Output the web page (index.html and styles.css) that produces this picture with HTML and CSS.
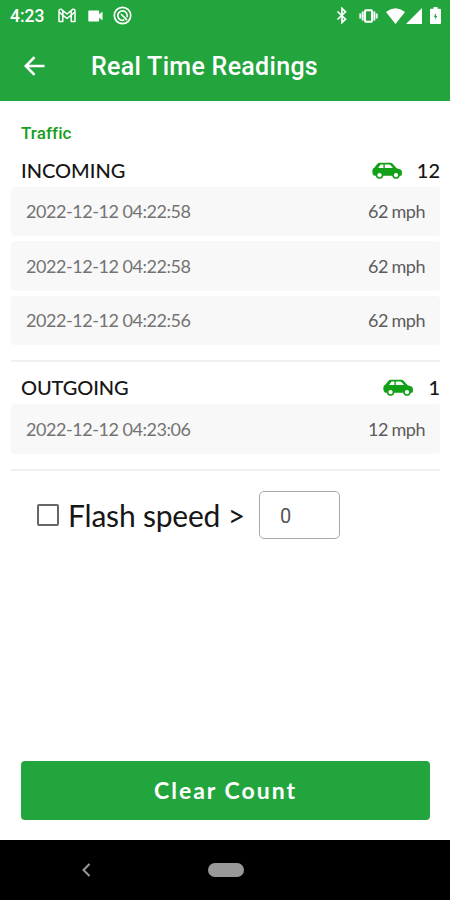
FILE: index.html
```
<!DOCTYPE html>
<html lang="en">
<head>
<meta charset="utf-8">
<title>Real Time Readings</title>
<link rel="stylesheet" href="styles.css">
</head>
<body>
<svg class="defs" aria-hidden="true">
  <symbol id="car" viewBox="0 0 31 18">
    <path fill="currentColor" fill-rule="evenodd" d="M8 .5h11q1.300 0 2.300 1l4.200 4.600 3.500 1q1.900.6 1.900 2.700v2.700q0 1.400-1.300 1.400h-.8a4.100 4.100 0 0 1-8 0H11.800a4.100 4.100 0 0 1-8 0H3Q.3 13.900.3 9q0-2.500 2.300-3.500L5.400 1.800Q6.400.5 8 .5ZM8.800 2.300 6.300 6h5.500V2.300ZM13.200 2.300V6h8.500l-2.700-3.200q-.5-.5-1.200-.5ZM7.800 11a2.200 2.200 0 1 0 .01 0ZM24.800 11a2.200 2.200 0 1 0 .01 0Z"/>
  </symbol>
</svg>
<div class="screen">
  <header class="header">
    <div class="status">
      <span class="clock">4:23</span>
      <svg class="gmail" width="18" height="15" viewBox="0 0 18 15" fill="none" stroke="#fff" stroke-width="1.500" stroke-linejoin="round"><path d="M1 13.500V3Q1 1 3 1.200L9 6l6-4.800q2-.2 2 1.800v10.500h-3.800V7.200L9 10.500 4.800 7.200v6.300ZM1.200 4l3.600 3.200V2.600M16.800 4l-3.600 3.200V2.600"/></svg>
      <svg class="video" width="15" height="12" viewBox="0 0 15 12" fill="#fff"><path d="M1 .5h9.500q.7 0 .7.700V4.500l3.300-3v9l-3.300-3v3.300q0 .7-.7.700H1q-.7 0-.7-.7V1.200Q.3.500 1 .5Z"/></svg>
      <svg class="sync" width="19" height="19" viewBox="0 0 19 19" fill="none" stroke="#fff" stroke-width="1.700"><circle cx="9.500" cy="9.500" r="8.200"/><path d="M13.900 11.200a4.700 4.700 0 1 0-2.600 2.700M8 8l6 6.200"/></svg>
      <span class="spacer"></span>
      <svg class="bluetooth" width="12" height="17" viewBox="0 0 12 17" fill="none" stroke="#fff" stroke-width="1.700"><path d="m1.500 4.500 8 7.700L6 15.600V1.400l3.500 3.400-8 7.700"/></svg>
      <svg class="vibrate" width="19" height="14" viewBox="0 0 19 14" fill="none" stroke="#fff"><rect x="6" y="1.200" width="7" height="11.600" rx=".8" stroke-width="2"/><path stroke-width="1.900" d="M3.700 2.500v9M15.300 2.500v9M1.300 4.500v5M17.700 4.500v5"/></svg>
      <svg class="wifi" width="19" height="16" viewBox="0 0 19 16" fill="#fff"><path d="M0 4Q9.500-3.300 19 4L9.500 16Z"/></svg>
      <svg class="signal" width="16" height="16" viewBox="0 0 16 16" fill="#fff"><path d="M16 0v16H0Z"/></svg>
      <svg class="battery" width="11" height="17" viewBox="0 0 11 17" fill="#fff" fill-rule="evenodd"><path d="M3.500 0h4v1.800H10q1 0 1 1V16q0 1-1 1H1q-1 0-1-1V2.800q0-1 1-1h2.500ZM6 6 3.800 10h1.500v3L7.200 9H6Z"/></svg>
    </div>
    <div class="toolbar">
      <svg class="back" width="22" height="20" viewBox="0 0 22 20" fill="none" stroke="#fff" stroke-width="2.600"><path d="M20.500 10H2.500M10.500 1.200 1.800 10l8.700 8.800"/></svg>
      <h1 class="title">Real Time Readings</h1>
    </div>
  </header>
  <main class="content">
    <h2 class="section">Traffic</h2>
    <section class="group">
      <div class="group-head"><span class="incoming">INCOMING</span><svg class="car" width="30" height="18"><use href="#car"/></svg><span class="count">12</span></div>
      <div class="row"><span class="time">2022-12-12 04:22:58</span><span class="speed">62 mph</span></div>
      <div class="row"><span class="time">2022-12-12 04:22:58</span><span class="speed">62 mph</span></div>
      <div class="row"><span class="time">2022-12-12 04:22:56</span><span class="speed">62 mph</span></div>
    </section>
    <section class="group">
      <div class="group-head"><span class="outgoing">OUTGOING</span><svg class="car" width="30" height="18"><use href="#car"/></svg><span class="count">1</span></div>
      <div class="row"><span class="time">2022-12-12 04:23:06</span><span class="speed">12 mph</span></div>
    </section>
    <div class="flash">
      <span class="checkbox"></span>
      <span class="flash-label">Flash speed &gt;</span>
      <span class="field">0</span>
    </div>
    <button class="clear">Clear Count</button>
  </main>
  <nav class="nav">
    <svg class="nav-back" width="9" height="14" viewBox="0 0 9 14" fill="none" stroke="#999" stroke-width="2"><path d="M7.500 1 1.500 7l6 6"/></svg>
    <span class="pill"></span>
  </nav>
</div>
</body>
</html>
```
FILE: styles.css
```
* { box-sizing: border-box; }
body { margin: 0; background: #fff; font-family: Lato, sans-serif; color: #161616; }
.defs { position: absolute; width: 0; height: 0; }
.screen { width: 450px; height: 900px; display: flex; flex-direction: column; overflow: hidden; }
.header { height: 100.5px; flex: none; background: #23a53d; color: #fff; font-family: Roboto, sans-serif; }
.status { height: 31px; display: flex; align-items: center; padding: 0 9px 0 10px; }
.status svg { flex: none; }
.clock { width: 48px; font-size: 17.5px; font-weight: 500; line-height: 32px; }
.video { margin-left: 12px; }
.sync { margin-left: 10px; }
.spacer { flex: 1; }
.vibrate { margin-left: 11px; }
.wifi { margin-left: 8px; }
.signal { margin-left: 1px; }
.battery { margin-left: 8px; }
.toolbar { height: 69px; display: flex; align-items: center; padding-left: 24px; }
.title { margin: 3px 0 0 45px; font-size: 25px; line-height: 30px; font-weight: 500; letter-spacing: .3px; white-space: nowrap; }
.content { flex: 1; display: flex; flex-direction: column; padding: 21px 10px 20px 11px; }
.section { margin: 0 0 0 10px; font: 500 17px/22px Roboto, sans-serif; letter-spacing: .1px; color: #18a020; }
.group { border-bottom: 2px solid #f0f0f0; padding-bottom: 15px; }
.group-head { height: 43px; padding: 9px 0 0 10px; display: flex; align-items: center; font-size: 20px; font-weight: 500; line-height: 30px; }
.group + .group .group-head { height: 42px; padding-top: 8px; }
.outgoing { letter-spacing: -.1px; }
.car { margin: 2px 0 0 auto; color: #12a018; }
.count { margin-left: 15px; }
.row { height: 49.5px; margin-bottom: 5px; background: #f8f8f8; border-radius: 4px; padding: 0 15px; display: flex; align-items: center; justify-content: space-between; font-size: 18px; letter-spacing: -.45px; color: #737373; }
.row:last-child { margin-bottom: 0; }
.speed { color: #5c5c5c; letter-spacing: -.5px; word-spacing: -.5px; }
.flash { display: flex; align-items: center; padding: 20px 0 0 26px; }
.checkbox { width: 22px; height: 22px; border: 2px solid #666; border-radius: 2px; }
.flash-label { width: 191px; margin: 0 0 0 9px; font-size: 30px; line-height: 40px; letter-spacing: -.2px; white-space: nowrap; }
.field { width: 81px; height: 48px; border: 1px solid #aaa; border-radius: 5px; padding-left: 20px; font: 20px/49px Roboto, sans-serif; color: #555; }
.clear { margin: auto 10px 0; height: 59px; flex: none; border: 0; border-radius: 4px; background: #23a53d; color: #fff; font: 700 23px/59px Lato, sans-serif; letter-spacing: 2px; padding: 0; }
.nav { height: 60px; flex: none; background: #000; display: flex; align-items: center; padding-left: 82px; }
.pill { width: 36px; height: 14px; border-radius: 7px; background: #999; margin-left: 117px; }
```
